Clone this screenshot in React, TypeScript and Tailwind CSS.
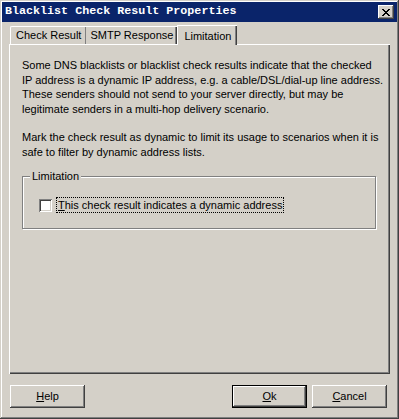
import React from 'react'

const raised =
  'shadow-[inset_-1px_-1px_#404040,inset_1px_1px_#ffffff,inset_-2px_-2px_#808080,inset_2px_2px_#d4d0c8]'

function Button({ mnemonic, rest, isDefault }: { mnemonic: string; rest: string; isDefault?: boolean }) {
  return (
    <button
      className={
        'w-[75px] h-[23px] bg-[#d4d0c8] text-black text-[11px] flex items-center justify-center ' +
        (isDefault
          ? 'border border-black shadow-[inset_-1px_-1px_#404040,inset_1px_1px_#ffffff,inset_-2px_-2px_#808080]'
          : raised)
      }
    >
      <span>
        <span className="underline">{mnemonic}</span>
        {rest}
      </span>
    </button>
  )
}

export default function App() {
  const lines1 = [
    'Some DNS blacklists or blacklist check results indicate that the checked',
    'IP address is a dynamic IP address, e.g. a cable/DSL/dial-up line address.',
    'These senders should not send to your server directly, but may be',
    'legitimate senders in a multi-hop delivery scenario.',
  ]
  const lines2 = [
    'Mark the check result as dynamic to limit its usage to scenarios when it is',
    'safe to filter by dynamic address lists.',
  ]

  return (
    <div
      className="w-[399px] h-[419px] bg-[#d4d0c8] flex flex-col p-[2px] shadow-[inset_-1px_-1px_#404040,inset_1px_1px_#d4d0c8,inset_-2px_-2px_#808080,inset_2px_2px_#ffffff] text-black"
      style={{ fontFamily: '"Liberation Sans", Arial, sans-serif' }}
    >
      {/* title bar */}
      <div className="h-[20px] bg-[#0a246a] flex items-center justify-between pl-[3px] pr-[3px]">
        <span className="text-white font-bold text-[11.7px]" style={{ fontFamily: '"Liberation Mono", monospace' }}>
          Blacklist Check Result Properties
        </span>
        <div className={'w-[16px] h-[14px] bg-[#d4d0c8] flex items-center justify-center ' + raised}>
          <svg width="8" height="7" viewBox="0 0 8 7">
            <path d="M0 0h2v1h1v1h2V1h1V0h2v1H7v1H6v1H5v1h1v1h1v1h1v1H6V6H5V5H3v1H2v1H0V6h1V5h1V4h1V3H2V2H1V1H0z" fill="#000" />
          </svg>
        </div>
      </div>

      {/* tabs */}
      <div className="flex items-end pl-[8px] pt-[2px] h-[22px] text-[11px]">
        <div className="h-[18px] px-[5px] flex items-center border-t border-l border-white rounded-tl-[2px] shadow-[inset_-1px_0_#808080]">
          Check Result
        </div>
        <div className="h-[18px] px-[4px] flex items-center border-t border-white shadow-[inset_-1px_0_#404040,inset_-2px_0_#808080]">
          SMTP Response
        </div>
        <div className="h-[20px] -mb-[1px] px-[6px] flex items-start pt-[2px] bg-[#d4d0c8] relative z-10 border-t border-l border-white shadow-[inset_-1px_0_#404040,inset_-2px_0_#808080]">
          Limitation
        </div>
      </div>

      {/* tab page */}
      <div className="mx-[7px] h-[330px] flex flex-col border-t border-l border-white shadow-[inset_-1px_-1px_#404040,inset_-2px_-2px_#808080] pl-[12px] pr-[14px] pt-[13px] text-[11px] leading-[14.5px]">
        <div>
          {lines1.map((l) => (
            <div key={l} className="whitespace-nowrap">{l}</div>
          ))}
        </div>
        <div className="mt-[14px]">
          {lines2.map((l) => (
            <div key={l} className="whitespace-nowrap">{l}</div>
          ))}
        </div>

        {/* group box */}
        <div className="relative mt-[17px] h-[53px] border border-[#808080] shadow-[inset_1px_1px_#ffffff,1px_1px_#ffffff] pl-[16px] pt-[21px]">
          <span className="absolute -top-[8px] left-[7px] bg-[#d4d0c8] px-[2px]">Limitation</span>
          <label className="flex items-center gap-[5px]">
            <span className="w-[13px] h-[13px] bg-white shadow-[inset_1px_1px_#808080,inset_-1px_-1px_#ffffff,inset_2px_2px_#404040,inset_-2px_-2px_#d4d0c8]" />
            <span className="outline outline-1 outline-dotted outline-black px-[1px] leading-[14px]">
              <span className="underline">T</span>his check result indicates a dynamic address
            </span>
          </label>
        </div>
      </div>

      {/* buttons */}
      <div className="flex items-center justify-between pl-[8px] pr-[10px] mt-[11px]">
        <Button mnemonic="H" rest="elp" />
        <div className="flex gap-[5px]">
          <Button mnemonic="O" rest="k" isDefault />
          <Button mnemonic="C" rest="ancel" />
        </div>
      </div>
    </div>
  )
}
